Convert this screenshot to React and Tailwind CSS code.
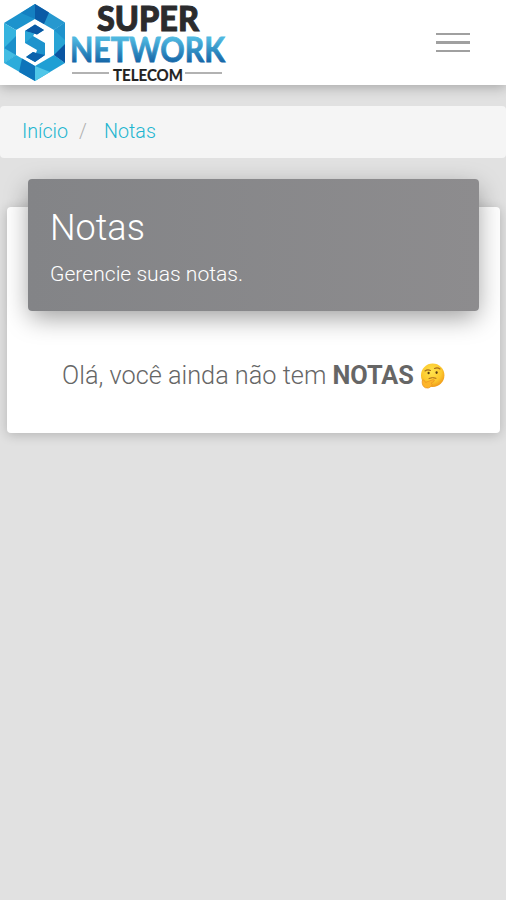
import React from 'react';

function Logo() {
  return (
    <svg width="230" height="85" viewBox="0 0 230 85" className="block shrink-0 overflow-visible">
      <defs>
        <linearGradient id="word" x1="0" y1="0" x2="0" y2="1">
          <stop offset="0.25" stopColor="#4fb8e0" />
          <stop offset="0.85" stopColor="#1464a6" />
        </linearGradient>
      </defs>
      {/* ring */}
      <polygon points="35,4 65,22.5 54,30 35,19" fill="#2698cf" />
      <polygon points="35,4 49,12.5 44,24 35,19" fill="#0a5ba6" />
      <polygon points="35,4 35,19 16,30 4,23" fill="#1c93cd" />
      <polygon points="35,4 35,19 21,13" fill="#1480c1" />
      <polygon points="4,23 16,30 16,42 4,48" fill="#35b4df" />
      <polygon points="4,48 16,36 16,55 4,63" fill="#1a8fca" />
      <polygon points="4,48 16,55 4,63" fill="#43bde3" />
      <polygon points="4,63 16,55 35,66 35,81" fill="#2cacdb" />
      <polygon points="22,58.5 35,66 35,81 19,72" fill="#0e74ba" />
      <polygon points="35,66 54,55 65,63 35,81" fill="#1f9fd4" />
      <polygon points="35,66 50,72 35,81" fill="#50c6e8" />
      <polygon points="65,22.5 54,30 54,55 65,63" fill="#29a4d5" />
      <polygon points="65,22.5 65,40 54,30" fill="#1f92cc" />
      <polygon points="65,44 65,63 54,55" fill="#0a55a2" />
      {/* monogram */}
      <polygon points="35,24.5 44,30 37,34.5 34,33.5 33,36 45,43 45,55 35,62 26,57 33,52 36,53 37,50 25,43 25,31" fill="#1d93cd" />
      <polygon points="35,24.5 44,30 37,34.5 34,33.5 25,31" fill="#0a58a3" />
      <polygon points="25,31 34,33.5 33,36 25,43" fill="#29a5d7" />
      <polygon points="33,52 36,53 45,55 35,62 26,57" fill="#0b62ac" />
      <text x="97" y="31" textLength="102" lengthAdjust="spacingAndGlyphs" fill="#2b2b2d" stroke="#2b2b2d" strokeWidth="1" className="font-['Lato',sans-serif] text-[35px] font-black">SUPER</text>
      <text x="70" y="62" textLength="155" lengthAdjust="spacingAndGlyphs" fill="url(#word)" stroke="url(#word)" strokeWidth="0.8" className="font-['Lato',sans-serif] text-[34px] font-bold">NETWORK</text>
      <text x="113" y="81" textLength="70" lengthAdjust="spacingAndGlyphs" fill="#222" stroke="#222" strokeWidth="0.2" className="font-['Lato',sans-serif] text-[17px] font-bold">TELECOM</text>
      <path d="M72 73H109M185 73H222" stroke="#999" strokeWidth="1.6" />
    </svg>
  );
}

function ThinkingFace() {
  return (
    <svg width="25" height="26" viewBox="0 0 25 26" className="ml-1.5 shrink-0">
      <defs>
        <radialGradient id="face" cx="0.45" cy="0.35" r="0.65">
          <stop offset="0" stopColor="#ffe34d" />
          <stop offset="0.65" stopColor="#fdc92e" />
          <stop offset="1" stopColor="#f09a1a" />
        </radialGradient>
      </defs>
      <circle cx="12.7" cy="12.3" r="11.7" fill="url(#face)" />
      <path d="M5 8Q7.500 6 10.500 7.500M14.500 5.500Q17.500 4 20 6" fill="none" stroke="#a86d1c" strokeWidth="1.1" strokeLinecap="round" />
      <ellipse cx="8.6" cy="10" rx="1.1" ry="1.3" fill="#5b3d14" />
      <ellipse cx="16.6" cy="9.6" rx="1.1" ry="1.4" fill="#5b3d14" />
      <path d="M9 15.400Q12.500 13.800 16 15.200" fill="none" stroke="#a8641a" strokeWidth="1" strokeLinecap="round" />
      <path d="M2.2 17.500Q3.600 16 4.600 18L5.600 19.400L13 16.600Q15.200 16.800 14 18.400L11 20.200Q13 21 11.600 23Q9 26 5.400 24.800Q1.600 23 2.200 17.500Z" fill="#fdb52a" stroke="#ea9122" strokeWidth="0.7" />
    </svg>
  );
}

export default function App() {
  return (
    <div className="min-h-[900px] bg-[#e1e1e1] font-['Roboto',sans-serif] font-light">
      <header className="flex h-[85px] items-center justify-between bg-white shadow-[0_2px_12px_rgba(0,0,0,0.28)]">
        <Logo />
        <button aria-label="Menu" className="mr-9 flex flex-col gap-[6px]">
          <span className="block h-[2.500px] w-[34px] bg-[#a0a0a0]" />
          <span className="block h-[2.500px] w-[34px] bg-[#a0a0a0]" />
          <span className="block h-[2.500px] w-[34px] bg-[#a0a0a0]" />
        </button>
      </header>

      <nav className="mt-[21px] flex h-[52px] items-center rounded bg-[#f5f5f5] px-[22px] text-[19.7px] text-[#1fb5d0]">
        <a className="w-[57px]">Início</a>
        <span className="w-[25px] text-[#b0b0b0]">/</span>
        <a>Notas</a>
      </nav>

      <main className="mr-[6px] ml-[7px] mt-[49px] flex h-[226px] flex-col rounded bg-white px-[21px] shadow-[0_2px_12px_rgba(0,0,0,0.2)]">
        <div className="-mt-7 h-[132px] shrink-0 rounded bg-linear-to-r from-[#838487] to-[#8d8c8e] px-[22px] pt-[26px] text-white shadow-[0_8px_26px_-2px_rgba(0,0,0,0.4)]">
          <h1 className="text-[36px] leading-[46px]">Notas</h1>
          <p className="mt-[10px] text-[21.1px] leading-[26px]">Gerencie suas notas.</p>
        </div>
        <div className="mt-[50px] flex items-center justify-center text-[25.3px] leading-[30px] whitespace-nowrap text-[#666]">
          <p>Olá, você ainda não tem <b className="font-bold">NOTAS</b></p>
          <ThinkingFace />
        </div>
      </main>
    </div>
  );
}
